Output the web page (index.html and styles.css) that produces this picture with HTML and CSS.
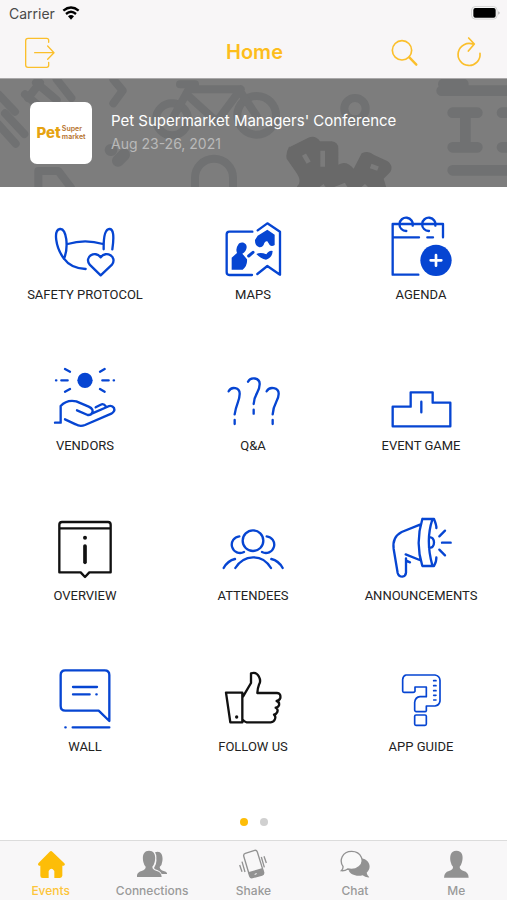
FILE: index.html
```html
<!DOCTYPE html>
<html lang="en">
<head>
<meta charset="utf-8">
<meta name="viewport" content="width=device-width, initial-scale=1">
<title>Home</title>
<link rel="stylesheet" href="styles.css">
</head>
<body>
<header class="top">
  <div class="status">
    <span>Carrier</span>
    <svg class="wifi" viewBox="0 0 54 42" aria-hidden="true"><path d="M4 14Q27-5 50 14M12 24Q27 11 42 24" fill="none" stroke="#000" stroke-width="7"/><path d="M18 31Q27 23 36 31L27 41Z"/></svg>
    <svg class="battery" viewBox="0 0 90 42" aria-hidden="true"><rect x="2" y="2" width="76" height="37" rx="10" fill="#fff" stroke="#d2d2d2" stroke-width="3"/><rect x="7" y="6" width="67" height="29" rx="6"/><path d="M82 16q8 5 0 10z" fill="#aaa"/></svg>
  </div>
  <nav class="bar">
    <button class="tool" type="button" aria-label="Exit"><svg viewBox="72 105 96 99"><path d="M146 124v-6q0-6-6-6H84q-7 0-7 7v73q0 7 7 7h56q6 0 6-6v-9M104 155h57M143 135l19 20-19 20"/></svg></button>
    <h1>Home</h1>
    <div class="tools">
      <button class="tool" type="button" aria-label="Search"><svg viewBox="402 107 96 99"><circle cx="444" cy="150" r="29" stroke-width="5"/><path d="M466 171l21 22" stroke-width="7"/></svg></button>
      <button class="tool" type="button" aria-label="Refresh"><svg viewBox="597 105 96 99"><path d="M678 157A33 33 0 1 1 658 130M644 111l17 18-18 21" stroke-width="5"/></svg></button>
    </div>
  </nav>
</header>

<section class="banner">
  <svg class="doodles" viewBox="0 9 1521 324" preserveAspectRatio="xMidYMid slice" aria-hidden="true">
    <g fill="none" stroke="#707172" stroke-width="24" stroke-linecap="round" stroke-linejoin="round">
      <path d="M-5 145l52 58M15 112l58 62M75 55l76 64M108 20l62 52M170 10l44 56M-5 55l50 52M120 20l-36 46"/>
      <path d="M340 10l28 34-28 38"/>
      <circle cx="516" cy="130" r="48"/><circle cx="770" cy="118" r="58"/>
      <path d="M516 130l50-90h150l54 80M560 55l90 82 72-97M540 25h45"/>
      <path d="M332 222h2M372 236l-18 18" stroke-width="36"/>
      <path d="M585 330v-25a57 57 0 0 1 114 0v25"/>
      <circle cx="1065" cy="98" r="32"/>
      <path d="M115 335v-50h60l38 50"/>
      <path d="M1325 44h200M1330 24h60M1358 110h74M1396 110v104M1358 214h74M1506 110h30M1506 214h30M1358 283h170" stroke-width="32"/>
    </g>
    <path d="M868 214l60-30q20-6 32 12h35q20 2 20 22v48q24-14 46 12l24-46q20-10 36 4l42 20q18 14 8 32l-20 20 12 40h-44l-24-24-26 22q-26-4-34-26l-40 16q-18 4-24-12l-14 10 20 32H878l14-36q16-14-6-44l-26-38q-4-16 8-38z" fill="#696969"/>
    <path d="M968 224v48M912 236l14 24M1112 270l22 8" stroke="#7b7b7b" stroke-width="14"/>
  </svg>
  <div class="logo"><strong>Pet</strong><span>Super<br>market</span></div>
  <div class="event"><h2>Pet Supermarket Managers' Conference</h2><p>Aug 23-26, 2021</p></div>
</section>

<main class="grid">
  <a class="item" href="#safety"><svg viewBox="159 30 192 192"><path d="M192 164C166 130 160 78 180 75S206 130 192 164Q212 193 257 195M203 120Q255 104 309 120M311 136Q310 76 328 75T337 136M302 214L269 182C251 158 286 138 302 160C318 138 353 158 336 182Z"/></svg><span>SAFETY PROTOCOL</span></a>
  <a class="item" href="#maps"><svg viewBox="663 30 192 192"><path d="M757 83h-69q-8 0-8 8v114q0 8 8 8h68M773 79l29-21 38 25v129l-38-26-30 24"/><path d="M695 161l16-14q-5-13 3-24c7-13 27-7 26 7q-1 13-13 19l14 17q2 19-13 31h-33z" fill="#0645d2" stroke="none"/><path d="M746 156l13-11" stroke-width="9"/><path d="M765 108l8-13 29-18 22 15v31q-9 6-15 0l-7-11q-6-2-9 5-4 14-15 13-14-5-13-22zM769 150q13-6 30 1 8-13 19-10-1 20-20 26-16-3-29-17z" fill="#0645d2" stroke="none"/></svg><span>MAPS</span></a>
  <a class="item" href="#agenda"><svg viewBox="405 30 192 192"><path d="M493 212h-77V60h151v40M416 100h79M520 100h17M457 81a20 20 0 1 1 19-16M525 81a20 20 0 1 1 19-16"/><circle cx="546" cy="169" r="47" fill="#0645d2" stroke="none"/><path d="M530 169h32M546 153v32" stroke="#fff" stroke-width="8"/></svg><span>AGENDA</span></a>

  <a class="item" href="#vendors"><svg viewBox="159 30 192 192"><circle cx="255" cy="76" r="23" fill="#0645d2" stroke="none"/><path d="M168 76h1M184 76h19M307 76h19M341 76h1M195 42l15 8M195 110l15-8M300 50l14-8M300 102l14 8M165 203h17v-50Q200 133 229 139L266 155Q283 163 276 174Q273 181 263 180L231 166M277 175L321 156Q335 148 342 159Q346 169 334 176L255 210Q240 216 227 208L195 193M287 157l15-8q9-5 16 6"/></svg><span>VENDORS</span></a>
  <a class="item" href="#qa"><svg viewBox="663 30 192 192"><path d="M686 109C694 93 720 97 719 117C719 138 709 144 704 178M704 195v12M744 80C752 64 780 68 779 88C779 113 762 116 761 147M761 164v12M800 109C808 93 837 97 836 117C836 138 820 144 818 178M818 195v12"/></svg><span>Q&amp;A</span></a>
  <a class="item" href="#game"><svg viewBox="405 30 192 192"><path d="M416 155h54v-43h66v31h53v71H416zM502 140v32"/></svg><span>EVENT GAME</span></a>

  <a class="item" href="#overview"><svg class="black" viewBox="159 30 192 192"><path d="M178 202V59q0-8 8-8h138q8 0 8 8v143h-64l-13 14-13-14zM178 70h154"/><path d="M255 123v49" stroke-width="11"/><circle cx="255" cy="98" r="6" fill="#111" stroke="none"/></svg><span>OVERVIEW</span></a>
  <a class="item" href="#attendees"><svg viewBox="663 30 192 192"><circle cx="759" cy="107" r="31"/><path d="M718 94a25 25 0 1 0 14 47M800 94a25 25 0 1 1-14 47M706 189Q725 158 759 157T813 189M671 189Q683 167 705 162M848 189Q836 167 814 162"/></svg><span>ATTENDEES</span></a>
  <a class="item" href="#announcements"><svg viewBox="1167 30 192 192"><path d="M1260 59l-55 22Q1176 96 1181 132l12 72q3 11 14 11 10-1 11-12v-43M1217 148l42 17M1219 167l11 5M1267 42h35q8 20 7 27M1267 42q-22 72 0 141h35q8-15 7-26M1297 44q-21 62 0 137M1287 98c20-8 20 37 0 29M1318 94l17-17M1326 113h26M1318 134l17 17"/></svg><span>ANNOUNCEMENTS</span></a>

  <a class="item" href="#wall"><svg viewBox="159 30 192 192"><path d="M328 195V57q0-14-14-14H196q-14 0-14 14v93q0 14 14 14h100l32 31M219 93h72M219 115h50M289 115h1M196 214h1M218 214h110"/></svg><span>WALL</span></a>
  <a class="item" href="#follow"><svg class="black" viewBox="663 30 192 192"><path d="M678 110h49v89h-36zM729 122l24-41V52c23-8 32 22 24 34q-4 10-5 25h59q12 1 10 15-3 8-11 9 9 2 7 13-3 7-10 7 8 3 5 13-3 7-10 8 6 4 3 13-3 9-13 10h-72q-7-1-12-8"/><circle cx="710" cy="183" r="5" fill="#111" stroke="none"/></svg><span>FOLLOW US</span></a>
  <a class="item" href="#guide"><svg class="thin" viewBox="405 30 192 192"><path d="M456 57h87q14 2 15 16v62q-2 13-15 15h-26v14q-1 3-4 3h-27q-4-1-4-4v-24q2-16 16-17h19V93h-34v13q-1 3-5 3h-28q-4 0-4-4V70q1-11 10-13zM486 177h27q4 0 4 4v23q0 4-4 4h-27q-4 0-4-4v-23q0-4 4-4zM539 74h7M539 89h7M539 104h7M539 118h7M539 132h7"/></svg><span>APP GUIDE</span></a>
</main>

<div class="pages" aria-hidden="true"><i class="dot on"></i><i class="dot"></i></div>

<nav class="tabs">
  <a class="tab on" href="#events"><svg viewBox="108 126 90 96"><path d="M149 137q4-4 8 0l36 35q4 5-2 7h-4v30q-1 6-7 7h-17v-21q-9-13-17 0v21h-18q-7 0-7-7v-30h-4q-5-2-2-7z"/></svg><span>Events</span></a>
  <a class="tab" href="#connections"><svg viewBox="413 126 90 96"><path d="M467 139c18-7 25 9 22 27q-1 12-8 17 1 9 12 12 10 2 11 9h-17q-5-11-20-14l-3-4q9-12 7-28 1-11-4-19z"/><path d="M449 134c18 0 21 17 17 34q-2 9-7 14 0 9 13 13 14 3 15 18h-75q1-15 15-18 13-4 12-13-5-5-7-14c-4-17 0-34 17-34z"/></svg><span>Connections</span></a>
  <a class="tab" href="#shake"><svg viewBox="716 126 90 96"><g fill="none" stroke="#929292" stroke-width="4"><path d="M738 142l28-9q6-1 8 5l19 61q1 6-5 8l-29 8q-6 1-8-5l-18-60q-1-6 5-8zM728 167l9 31M721 177l7 20M786 153l9 31M794 151l7 20"/></g><path d="M746 199l44-13 3 13q1 6-5 8l-29 8q-6 1-8-5z"/><path d="M766 205l6-2" stroke="#fff" stroke-width="3"/></svg><span>Shake</span></a>
  <a class="tab" href="#chat"><svg viewBox="1018 126 90 96"><path d="M1082 157c26 4 32 29 16 43q1 8 8 14-12 1-20-6c-20 5-38-3-42-15 25-2 38-16 38-36z"/><path d="M1027 181c-12-17-3-45 26-45s41 32 22 46c-9 8-22 10-34 7q-8 6-19 5 6-5 5-13z" fill="#f9f9f9" stroke="#929292" stroke-width="4"/></svg><span>Chat</span></a>
  <a class="tab" href="#me"><svg viewBox="1323 126 90 96"><path d="M1369 134c18 0 22 17 17 34q-2 9-7 14 0 9 12 13 14 3 15 20h-74q1-17 15-20 13-4 12-13-5-5-7-14c-4-17 0-34 17-34z"/></svg><span>Me</span></a>
</nav>
</body>
</html>
```
FILE: styles.css
```css
* { box-sizing: border-box; }

body {
  margin: 0;
  min-height: 100vh;
  display: flex;
  flex-direction: column;
  background: #fff;
  font-family: Inter, "Liberation Sans", sans-serif;
}

h1, h2, p { margin: 0; }
a { text-decoration: none; color: inherit; }

.top {
  background: #f8f6f7;
  border-bottom: 1px solid #aaa8a9;
}

.status {
  height: 26px;
  padding: 0 6px 0 9px;
  display: flex;
  align-items: center;
  gap: 7px;
  font-size: 14px;
  color: #4a4a4a;
}
.wifi { width: 18px; height: 14px; }
.battery { width: 30px; height: 14px; margin-left: auto; }

.bar {
  height: 52px;
  padding: 0 22px 0 24px;
  display: grid;
  grid-template-columns: 1fr auto 1fr;
  align-items: center;
}
.bar h1 {
  font-size: 20px;
  line-height: 24px;
  font-weight: 600;
  color: #fdbd1c;
}
.tools {
  display: flex;
  justify-content: flex-end;
  gap: 33px;
}
.tool {
  width: 32px;
  height: 33px;
  padding: 0;
  border: 0;
  background: none;
}
.tool svg {
  display: block;
  width: 32px;
  height: 33px;
  fill: none;
  stroke: #fbbf2b;
  stroke-width: 4;
  stroke-linecap: round;
  stroke-linejoin: round;
}

.banner {
  position: relative;
  height: 108px;
  padding: 0 30px;
  display: flex;
  align-items: center;
  gap: 19px;
  background: #7d7d7d;
  overflow: hidden;
}
.doodles {
  position: absolute;
  inset: 0;
  width: 100%;
  height: 100%;
}
.logo, .event { position: relative; }
.logo {
  width: 62px;
  height: 62px;
  border-radius: 7px;
  background: #fff;
  display: flex;
  align-items: center;
  justify-content: center;
  gap: 1px;
  color: #b5702a;
}
.logo span {
  font-size: 7px;
  line-height: 8px;
  font-weight: 600;
}
.logo strong {
  font-size: 15px;
  line-height: 16px;
  font-weight: 800;
  color: #e6a312;
}
.event { padding-bottom: 2px; }
.event h2 {
  font-size: 15px;
  line-height: 24px;
  font-weight: 400;
  color: #fff;
}
.event p {
  font-size: 14px;
  line-height: 22px;
  color: #b9b9b9;
}

.grid {
  flex: 1;
  padding: 0 2px 0 1px;
  display: grid;
  grid-template-columns: repeat(3, 1fr);
  grid-template-rows: repeat(4, 1fr);
}
.item {
  padding-top: 27px;
  display: flex;
  flex-direction: column;
  align-items: center;
  gap: 8px;
  font-family: Roboto, Inter, sans-serif;
  font-size: 13px;
  line-height: 18px;
  color: #222;
}
.item svg {
  width: 64px;
  height: 64px;
  fill: none;
  stroke: #0645d2;
  stroke-width: 7;
  stroke-linecap: round;
  stroke-linejoin: round;
}
.item .black { stroke: #111; }
.item .thin { stroke-width: 5; }

.pages {
  padding: 29px 0 14px;
  display: flex;
  justify-content: center;
  gap: 12px;
}
.dot {
  width: 8px;
  height: 8px;
  border-radius: 50%;
  background: #d0d0d0;
}
.dot.on { background: #fdbd08; }

.tabs {
  height: 60px;
  padding-top: 7px;
  display: grid;
  grid-template-columns: repeat(5, 1fr);
  background: #f8f7f8;
  border-top: 1px solid #dcdcdc;
}
.tab {
  display: flex;
  flex-direction: column;
  align-items: center;
  gap: 3px;
  font-size: 12px;
  line-height: 16px;
  font-weight: 500;
  color: #9a9a9a;
}
.tab svg {
  width: 30px;
  height: 32px;
  fill: #929292;
}
.tab.on { color: #fdc53a; }
.tab.on svg { fill: #fdbd08; }
```
